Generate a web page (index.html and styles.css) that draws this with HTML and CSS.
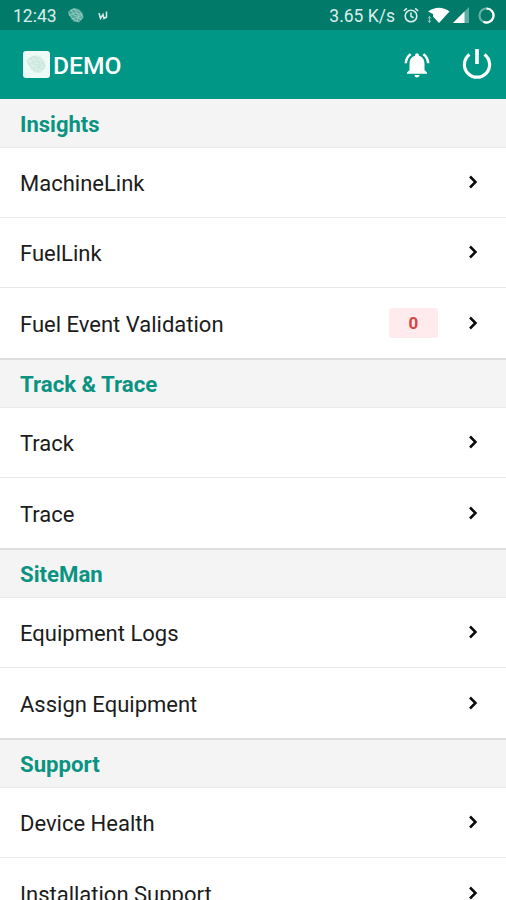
FILE: index.html
```html
<!DOCTYPE html>
<html lang="en">
<head>
<meta charset="utf-8">
<title>DEMO</title>
<link rel="stylesheet" href="styles.css">
</head>
<body>
<svg class="defs" aria-hidden="true">
  <symbol id="chevron" viewBox="0 0 12 16"><path d="M2 2.500l5.500 5.500-5.500 5.500" fill="none" stroke="#0a0a0a" stroke-width="2.500"/></symbol>
  <symbol id="globe" viewBox="0 0 18 18">
    <path d="M3 3l4-2 5 1 4 4 1 5-4 4-6 1-3-4-3-4z" fill="currentColor" opacity=".45"/>
    <path d="M1 5l6-3 6 3 3 6-4 5-6-3-4-5zM4 3l3 6 7 1M7 2l5 7-2 7M2 9l7-3 7 3M4 13l6-2 5 2" fill="none" stroke="currentColor" stroke-width=".8" opacity=".75"/>
  </symbol>
</svg>
<div class="status">
  <span class="time">12:43</span>
  <svg class="status-globe" width="18" height="17"><use href="#globe"/></svg>
  <svg class="status-w" width="10" height="11" viewBox="0 0 10 11"><path d="M1 3l1.500 5.500L5 4.500l1 4L8.500 7V1.500" fill="none" stroke="#d5ebe7" stroke-width="1.500"/></svg>
  <span class="speed">3.65 K/s</span>
  <svg class="alarm" width="16" height="17" viewBox="0 0 16 17" fill="none" stroke="#d9eeeb" stroke-width="1.600"><circle cx="8" cy="9" r="5.800"/><path d="M8 5.500V9.300l2.600 1.600M.8 4l3-2.700M15.200 4l-3-2.700"/></svg>
  <svg class="wifi" width="23" height="17" viewBox="0 0 23 17"><path d="M1 4.500Q12 -3 22.500 4.500L12 16 6 9.500V7z" fill="#fff"/><path d="M2.500 9v7M1 11.500l1.500-2 1.500 2M1 13.500l1.500 2 1.500-2" stroke="#8cc6bd" fill="none"/></svg>
  <svg class="signal" width="17" height="17" viewBox="0 0 17 17"><path d="M16 0v16H0z" fill="#5cada2"/><path d="M11.500 4.500V16H0z" fill="#fff"/></svg>
  <svg class="ring" width="17" height="17" viewBox="0 0 17 17" fill="none" stroke-width="2.200"><circle cx="8.500" cy="8.500" r="7" stroke="#65b1a7"/><path d="M8.500 1.500a7 7 0 1 1-3 13.300" stroke="#fff"/></svg>
</div>
<header class="appbar">
  <span class="logo"><svg width="21" height="21" viewBox="0 0 18 18"><use href="#globe" width="18" height="18"/></svg></span>
  <h1>DEMO</h1>
  <svg class="bell" width="30" height="30" viewBox="0 0 24 24" fill="#fff"><path d="M7.580 4.080L6.150 2.650C3.750 4.480 2.170 7.300 2.030 10.500h2c.15-2.650 1.510-4.970 3.550-6.420zm12.390 6.420h2c-.15-3.200-1.730-6.020-4.120-7.850l-1.420 1.430c2.020 1.450 3.390 3.770 3.540 6.420zM18 11c0-3.070-1.640-5.640-4.500-6.320V4c0-.83-.67-1.500-1.500-1.500s-1.500.67-1.500 1.500v.68C7.630 5.360 6 7.920 6 11v5l-2 2v1h16v-1l-2-2v-5zm-6 11c1.100 0 2-.9 2-2h-4c0 1.100.9 2 2 2z"/></svg>
  <svg class="power" width="30" height="32" viewBox="0 0 30 32" fill="none" stroke="#fff" stroke-width="3.200"><path d="M15 1v15" stroke-width="3.600"/><path d="M7.500 6.500a12.600 12.600 0 1 0 15 0"/></svg>
</header>
<main>
  <section>
    <h2>Insights</h2>
    <a class="row">MachineLink<svg class="chev"><use href="#chevron"/></svg></a>
    <a class="row">FuelLink<svg class="chev"><use href="#chevron"/></svg></a>
    <a class="row">Fuel Event Validation<span class="badge">0</span><svg class="chev"><use href="#chevron"/></svg></a>
  </section>
  <section>
    <h2>Track &amp; Trace</h2>
    <a class="row">Track<svg class="chev"><use href="#chevron"/></svg></a>
    <a class="row">Trace<svg class="chev"><use href="#chevron"/></svg></a>
  </section>
  <section>
    <h2>SiteMan</h2>
    <a class="row">Equipment Logs<svg class="chev"><use href="#chevron"/></svg></a>
    <a class="row">Assign Equipment<svg class="chev"><use href="#chevron"/></svg></a>
  </section>
  <section>
    <h2>Support</h2>
    <a class="row">Device Health<svg class="chev"><use href="#chevron"/></svg></a>
    <a class="row">Installation Support<svg class="chev"><use href="#chevron"/></svg></a>
  </section>
</main>
</body>
</html>
```
FILE: styles.css
```css
* { box-sizing: border-box; }
body {
  margin: 0;
  height: 900px;
  overflow: hidden;
  display: flex;
  flex-direction: column;
  font-family: Roboto, "Liberation Sans", sans-serif;
  background: #fff;
  color: #1c1c1c;
}
svg { flex: none; }
.defs { display: none; }
.status {
  flex: none;
  height: 30px;
  display: flex;
  align-items: center;
  padding: 1px 11px 0 13px;
  background: #027a69;
  color: #d9eeeb;
  font-size: 17.500px;
}
.status-globe { margin-left: 10px; color: #b5ddd7; }
.status-w { margin-left: 13px; }
.speed { margin-left: auto; }
.alarm { margin-left: 8px; }
.wifi { margin-left: 8px; }
.signal { margin-left: 3px; }
.ring { margin-left: 8px; }
.appbar {
  flex: none;
  height: 69px;
  display: flex;
  align-items: center;
  padding: 0 14px 0 23px;
  background: #019786;
  color: #fff;
}
.logo {
  width: 27px;
  height: 27px;
  display: grid;
  place-items: center;
  border-radius: 3px;
  background: #eefaf5;
  color: #c0e2d8;
}
.appbar h1 { margin: 2px 0 0 3px; font-size: 24.600px; font-weight: 500; }
.bell { margin-left: auto; }
.power { margin: -1px 0 0 30px; }
section { display: flex; flex-direction: column; }
h2 {
  margin: 0;
  height: 50px;
  display: flex;
  align-items: center;
  padding: 1px 20px 0;
  border-top: 2px solid #dedede;
  border-bottom: 1px solid #e9e9e9;
  background: #f4f4f4;
  color: #0b9382;
  font-size: 22.200px;
  font-weight: 700;
}
section:first-child h2 { height: 49px; padding-top: 3px; border-top: 0; font-size: 22px; }
.row {
  height: 70px;
  display: flex;
  align-items: center;
  padding: 2px 26px 0 20px;
  border-bottom: 1px solid #e8e8e8;
  font-size: 22px;
}
.row:last-child { border-bottom: 0; }
.chev { width: 12px; height: 16px; margin: -3px 0 0 auto; }
.badge {
  width: 49px;
  height: 30px;
  margin: -2px 0 0 auto;
  display: grid;
  place-items: center;
  border-radius: 3px;
  background: #ffebed;
  color: #d8453f;
  font-size: 17px;
  font-weight: 700;
}
.badge + .chev { margin-left: 30px; }
```
